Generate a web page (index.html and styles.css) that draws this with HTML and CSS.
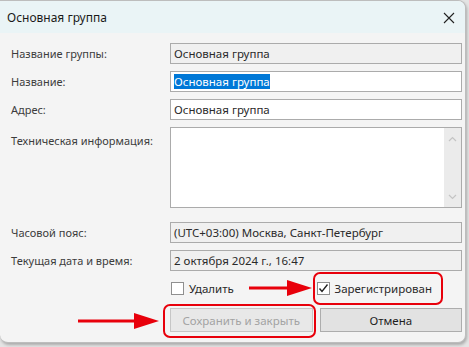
FILE: index.html
```html
<!DOCTYPE html>
<html lang="ru">
<head>
<meta charset="utf-8">
<link rel="stylesheet" href="styles.css">
</head>
<body>
<div class="window">
  <div class="titlebar">
    <span class="title">Основная группа</span>
    <svg class="close" width="12" height="12" viewBox="0 0 12 12"><path d="M1 1L11 11M11 1L1 11" stroke="#222" stroke-width="1.1" fill="none"/></svg>
  </div>
  <div class="content">
    <div class="form">
      <label class="lbl">Название группы:</label>
      <div class="field ro">Основная группа</div>
      <label class="lbl">Название:</label>
      <div class="field"><span class="sel">Основная группа</span></div>
      <label class="lbl">Адрес:</label>
      <div class="field">Основная группа</div>
      <label class="lbl lbl-top">Техническая информация:</label>
      <div class="area">
        <div class="scroll">
          <svg width="9" height="6" viewBox="0 0 9 6"><path d="M1 5L4.5 1.5L8 5" stroke="#c4c4c4" stroke-width="1.2" fill="none"/></svg>
          <svg width="9" height="6" viewBox="0 0 9 6"><path d="M1 1L4.5 4.5L8 1" stroke="#c4c4c4" stroke-width="1.2" fill="none"/></svg>
        </div>
      </div>
      <label class="lbl gap">Часовой пояс:</label>
      <div class="field ro gap">(UTC+03:00) Москва, Санкт-Петербург</div>
      <label class="lbl">Текущая дата и время:</label>
      <div class="field ro">2 октября 2024 г., 16:47</div>
    </div>
    <div class="checks">
      <div class="check"><span class="box"></span>Удалить</div>
      <div class="check"><span class="box"><svg width="11" height="11" viewBox="0 0 11 11"><path d="M1.5 5.5L4 8.5L9.5 1.5" stroke="#222" stroke-width="1.4" fill="none"/></svg></span>Зарегистрирован</div>
    </div>
    <div class="buttons">
      <div class="btn disabled">Сохранить и закрыть</div>
      <div class="btn">Отмена</div>
    </div>
  </div>
  <div class="hl hl-check"></div>
  <div class="hl hl-save"></div>
  <svg class="arrow arrow1" width="64" height="18" viewBox="0 0 64 18"><path d="M0 9H40" stroke="#e8000b" stroke-width="3"/><path d="M38 1L63 9L38 17Z" fill="#e8000b"/></svg>
  <svg class="arrow arrow2" width="82" height="18" viewBox="0 0 82 18"><path d="M0 9H58" stroke="#e8000b" stroke-width="3"/><path d="M56 1L81 9L56 17Z" fill="#e8000b"/></svg>
</div>
</body>
</html>
```
FILE: styles.css
```css
* { box-sizing: border-box; }
html, body { margin: 0; padding: 0; }
body {
  width: 469px;
  height: 347px;
  background: #e4e4e4;
  font-family: "Noto Sans", "Open Sans", sans-serif;
  overflow: hidden;
}
.window {
  position: relative;
  width: 466px;
  height: 343px;
  background: #f4f4f4;
  border: 1px solid #bdbdbd;
  border-left: none;
  border-radius: 0 8px 8px 8px;
  box-shadow: 1px 2px 3px rgba(0,0,0,0.25);
  overflow: hidden;
}
.titlebar {
  height: 32px;
  background: #eaf4f6;
  display: flex;
  align-items: center;
  justify-content: space-between;
  padding: 0 10px 0 7px;
}
.title {
  font-size: 12px;
  color: #1a1a1a;
}
.close { margin-top: 1px; }
.content {
  padding: 10px 3px 0 0;
}
.form {
  display: grid;
  grid-template-columns: 170px 292px;
  row-gap: 7px;
}
.lbl {
  font-size: 11px;
  color: #3c3c3c;
  padding-left: 11px;
  align-self: center;
}
.lbl-top { align-self: start; padding-top: 6px; }
.field {
  height: 21px;
  border: 1px solid #ababab;
  background: #fff;
  font-size: 11.5px;
  color: #2a2a2a;
  padding: 0 3px;
  line-height: 19px;
  white-space: nowrap;
}
.field.ro { background: #f0f0f0; }
.sel { background: #0078d7; color: #fff; }
.gap { margin-top: 7px; }
.area {
  height: 81px;
  border: 1px solid #ababab;
  background: #fff;
  display: flex;
  justify-content: flex-end;
}
.scroll {
  width: 17px;
  background: #ebebeb;
  display: flex;
  flex-direction: column;
  justify-content: space-between;
  align-items: center;
  padding: 8px 0 7px;
}
.checks {
  display: flex;
  margin: 10px 0 0 171px;
  height: 14px;
  align-items: center;
}
.check {
  display: flex;
  align-items: center;
  gap: 5px;
  font-size: 11.5px;
  color: #2a2a2a;
  width: 149px;
}
.box {
  width: 13px;
  height: 13px;
  border: 1px solid #8f8f8f;
  background: #fff;
  display: flex;
  align-items: center;
  justify-content: center;
}
.buttons {
  display: flex;
  gap: 7px;
  margin: 13px 0 0 170px;
}
.btn {
  width: 143px;
  height: 24px;
  border: 1px solid #adadad;
  background: #e2e2e2;
  font-size: 11.5px;
  color: #1e1e1e;
  display: flex;
  align-items: center;
  justify-content: center;
}
.btn.disabled {
  background: #e8e8e8;
  border-color: #c6c6c6;
  color: #a3a3a3;
}
.hl {
  position: absolute;
  border: 2px solid #e8000b;
  border-radius: 7px;
}
.hl-check { left: 313px; top: 271px; width: 130px; height: 33px; }
.hl-save { left: 163px; top: 303px; width: 153px; height: 34px; }
.arrow { position: absolute; }
.arrow1 { left: 249px; top: 278px; }
.arrow2 { left: 78px; top: 311px; }
```
